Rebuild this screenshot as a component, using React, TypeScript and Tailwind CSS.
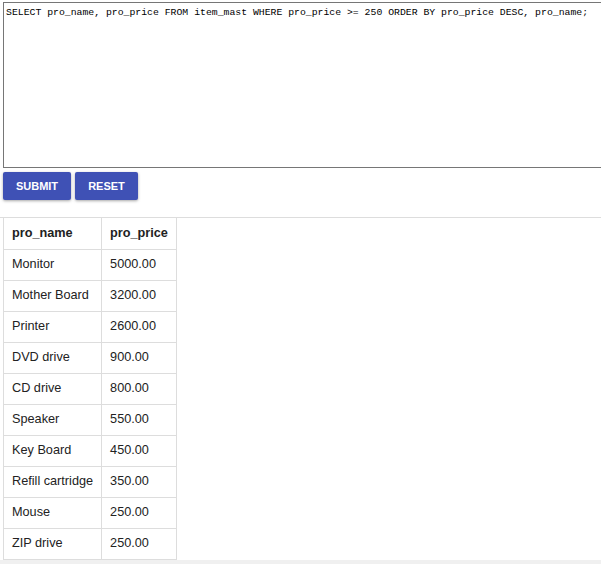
import React from 'react';

const query =
  'SELECT pro_name, pro_price FROM item_mast WHERE pro_price >= 250 ORDER BY pro_price DESC, pro_name;';

const rows: [string, string][] = [
  ['Monitor', '5000.00'],
  ['Mother Board', '3200.00'],
  ['Printer', '2600.00'],
  ['DVD drive', '900.00'],
  ['CD drive', '800.00'],
  ['Speaker', '550.00'],
  ['Key Board', '450.00'],
  ['Refill cartridge', '350.00'],
  ['Mouse', '250.00'],
  ['ZIP drive', '250.00'],
];

export default function App() {
  return (
    <div className="w-[601px] h-[564px] overflow-hidden bg-white">
      <textarea
        readOnly
        value={query}
        spellCheck={false}
        className="block ml-[3px] mt-[2px] w-[620px] h-[166px] resize-none border border-[#767676] px-[2px] pt-[3px] pb-[2px] text-[9.8px] leading-[13px] text-black outline-none"
        style={{ fontFamily: '"Liberation Mono", monospace' }}
      />
      <div className="flex gap-[4px] ml-[3px] mt-[4px]" style={{ fontFamily: '"Liberation Sans", Arial, sans-serif' }}>
        <button className="h-[28px] w-[68px] rounded-[2px] bg-[#3f51b5] text-[11px] font-bold text-white shadow-[0_1px_3px_rgba(0,0,0,0.35)]">
          SUBMIT
        </button>
        <button className="h-[28px] w-[63px] rounded-[2px] bg-[#3f51b5] text-[11px] font-bold text-white shadow-[0_1px_3px_rgba(0,0,0,0.35)]">
          RESET
        </button>
      </div>
      <div className="mt-[17px] border-t border-[#dddddd]">
        <table
          className="ml-[3px] border-collapse text-[12.7px] text-[#222]"
          style={{ fontFamily: '"Liberation Sans", Arial, sans-serif' }}
        >
          <thead>
            <tr>
              <th className="border border-t-0 border-[#dddddd] px-[8px] h-[31px] text-left font-bold">pro_name</th>
              <th className="border border-t-0 border-[#dddddd] px-[8px] h-[31px] text-left font-bold">pro_price</th>
            </tr>
          </thead>
          <tbody>
            {rows.map(([name, price]) => (
              <tr key={name}>
                <td className="border border-[#dddddd] px-[8px] h-[31px]">{name}</td>
                <td className="border border-[#dddddd] px-[8px] h-[31px]">{price}</td>
              </tr>
            ))}
          </tbody>
        </table>
        <div className="h-[10px] bg-[#f0f0f0]" />
      </div>
    </div>
  );
}
